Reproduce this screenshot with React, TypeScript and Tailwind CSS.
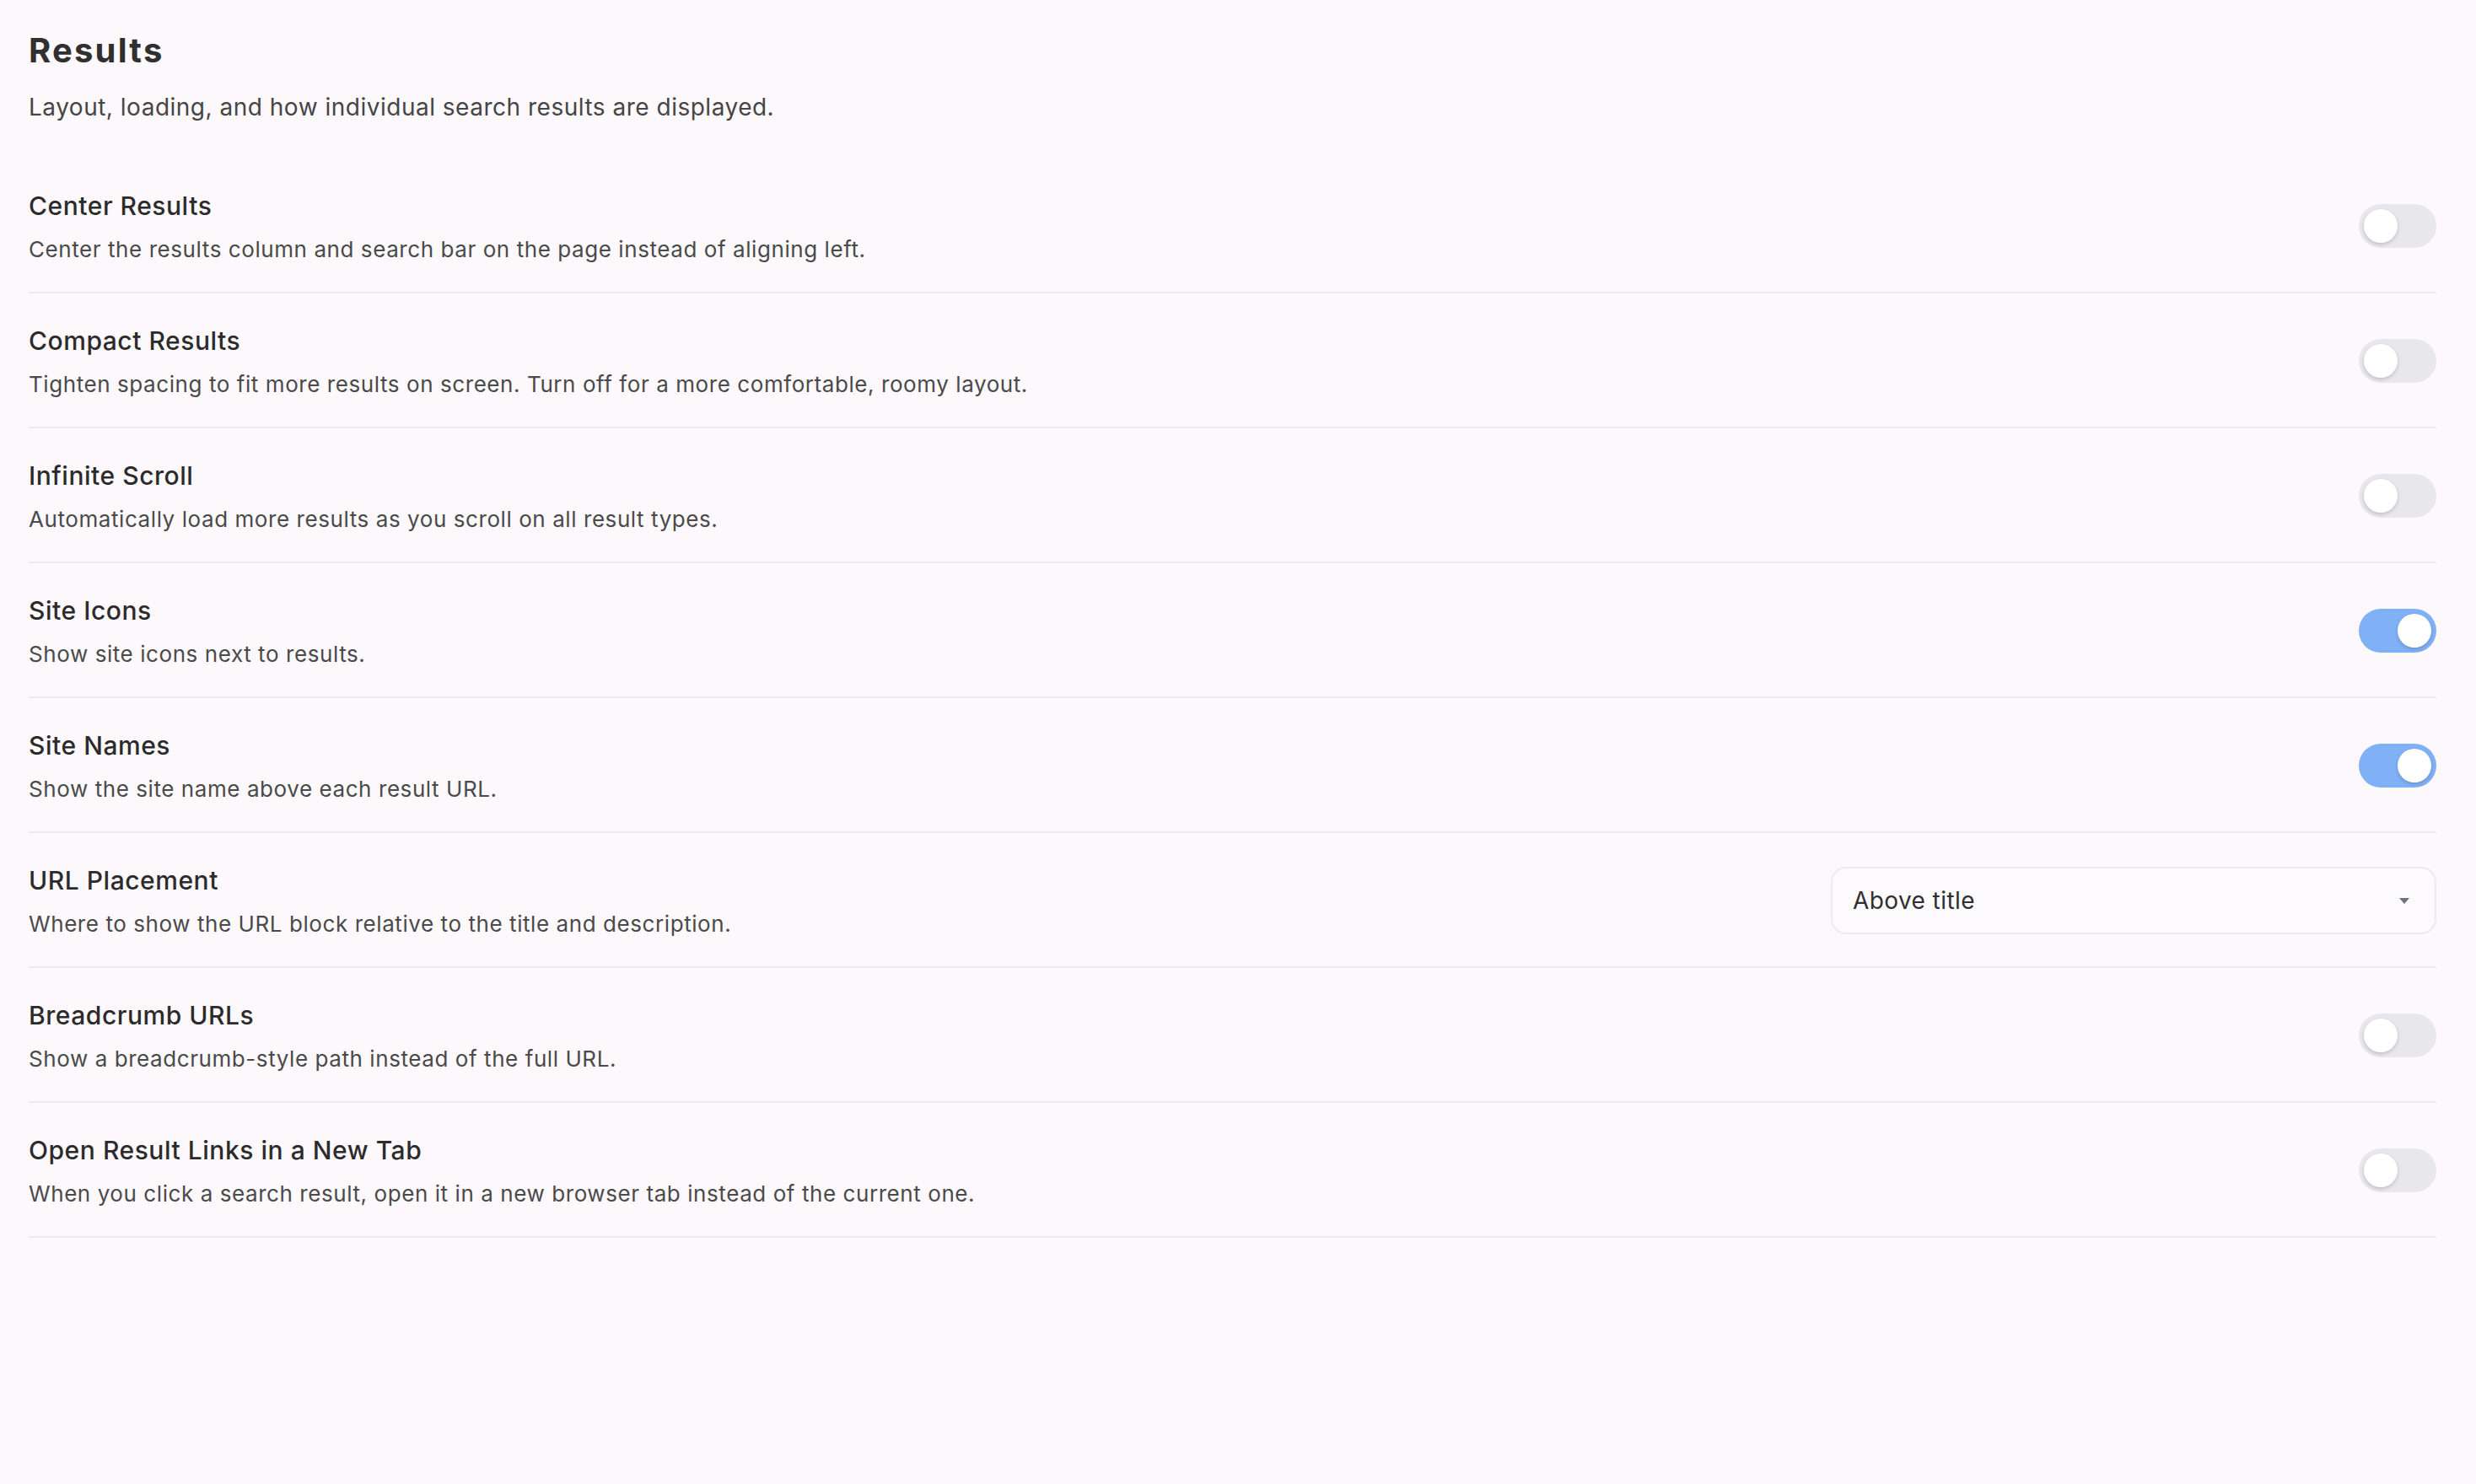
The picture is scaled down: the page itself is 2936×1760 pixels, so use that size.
import React, { useState } from 'react'

type Setting = {
  id: string
  title: string
  description: string
  kind: 'toggle' | 'select'
  on?: boolean
}

const settings: Setting[] = [
  { id: 'center', title: 'Center Results', description: 'Center the results column and search bar on the page instead of aligning left.', kind: 'toggle', on: false },
  { id: 'compact', title: 'Compact Results', description: 'Tighten spacing to fit more results on screen. Turn off for a more comfortable, roomy layout.', kind: 'toggle', on: false },
  { id: 'infinite', title: 'Infinite Scroll', description: 'Automatically load more results as you scroll on all result types.', kind: 'toggle', on: false },
  { id: 'icons', title: 'Site Icons', description: 'Show site icons next to results.', kind: 'toggle', on: true },
  { id: 'names', title: 'Site Names', description: 'Show the site name above each result URL.', kind: 'toggle', on: true },
  { id: 'url', title: 'URL Placement', description: 'Where to show the URL block relative to the title and description.', kind: 'select' },
  { id: 'breadcrumb', title: 'Breadcrumb URLs', description: 'Show a breadcrumb-style path instead of the full URL.', kind: 'toggle', on: false },
  { id: 'newtab', title: 'Open Result Links in a New Tab', description: 'When you click a search result, open it in a new browser tab instead of the current one.', kind: 'toggle', on: false },
]

const Toggle: React.FC<{ checked: boolean; onChange: () => void }> = ({ checked, onChange }) => (
  <button
    type="button"
    onClick={onChange}
    className={`flex h-[52px] w-[92px] shrink-0 items-center rounded-full px-[6px] transition-colors ${
      checked ? 'justify-end bg-[#80b1f6]' : 'justify-start bg-[#e8e8ec]'
    }`}
  >
    <span className="block h-[40px] w-[40px] rounded-full bg-white shadow-[0_2px_4px_rgba(0,0,0,0.18)]" />
  </button>
)

const UrlSelect: React.FC = () => (
  <button
    type="button"
    className="flex h-[80px] w-[718px] shrink-0 items-center justify-between rounded-[18px] border-2 border-[#ebebef] bg-[#fdfafd] pl-[24px] pr-[30px] text-left text-[28px] tracking-[0.015em] text-[#2f2f2f]"
  >
    <span>Above title</span>
    <svg width="12" height="7" viewBox="0 0 12 7">
      <path d="M0 0h12L6 7z" fill="#6b7280" />
    </svg>
  </button>
)

export default function App() {
  const [values, setValues] = useState<Record<string, boolean>>(() =>
    Object.fromEntries(settings.map(s => [s.id, !!s.on]))
  )

  return (
    <div
      className="min-h-screen bg-[#fcf8fc] pl-[34px] pr-[47px] pt-[32px]"
      style={{ fontFamily: 'Inter, "Noto Sans", sans-serif' }}
    >
      <h1 className="text-[40px] font-bold leading-[56px] tracking-[0.055em] text-[#303030]">Results</h1>
      <p className="mt-[18px] text-[28px] leading-[42px] tracking-[0.018em] text-[#454545]">
        Layout, loading, and how individual search results are displayed.
      </p>

      <div className="mt-[40px]">
        {settings.map(s => (
          <div
            key={s.id}
            className="flex items-center justify-between gap-[40px] border-b-2 border-[#ecebef] pb-[30px] pt-[32px]"
          >
            <div>
              <div className="text-[30px] font-medium leading-[48px] tracking-[0.018em] text-[#2b2b2b]">{s.title}</div>
              <div className="mt-[8px] text-[26px] leading-[40px] tracking-[0.022em] text-[#4a4a4a]">{s.description}</div>
            </div>
            {s.kind === 'toggle' ? (
              <Toggle
                checked={values[s.id]}
                onChange={() => setValues(v => ({ ...v, [s.id]: !v[s.id] }))}
              />
            ) : (
              <UrlSelect />
            )}
          </div>
        ))}
      </div>
    </div>
  )
}
